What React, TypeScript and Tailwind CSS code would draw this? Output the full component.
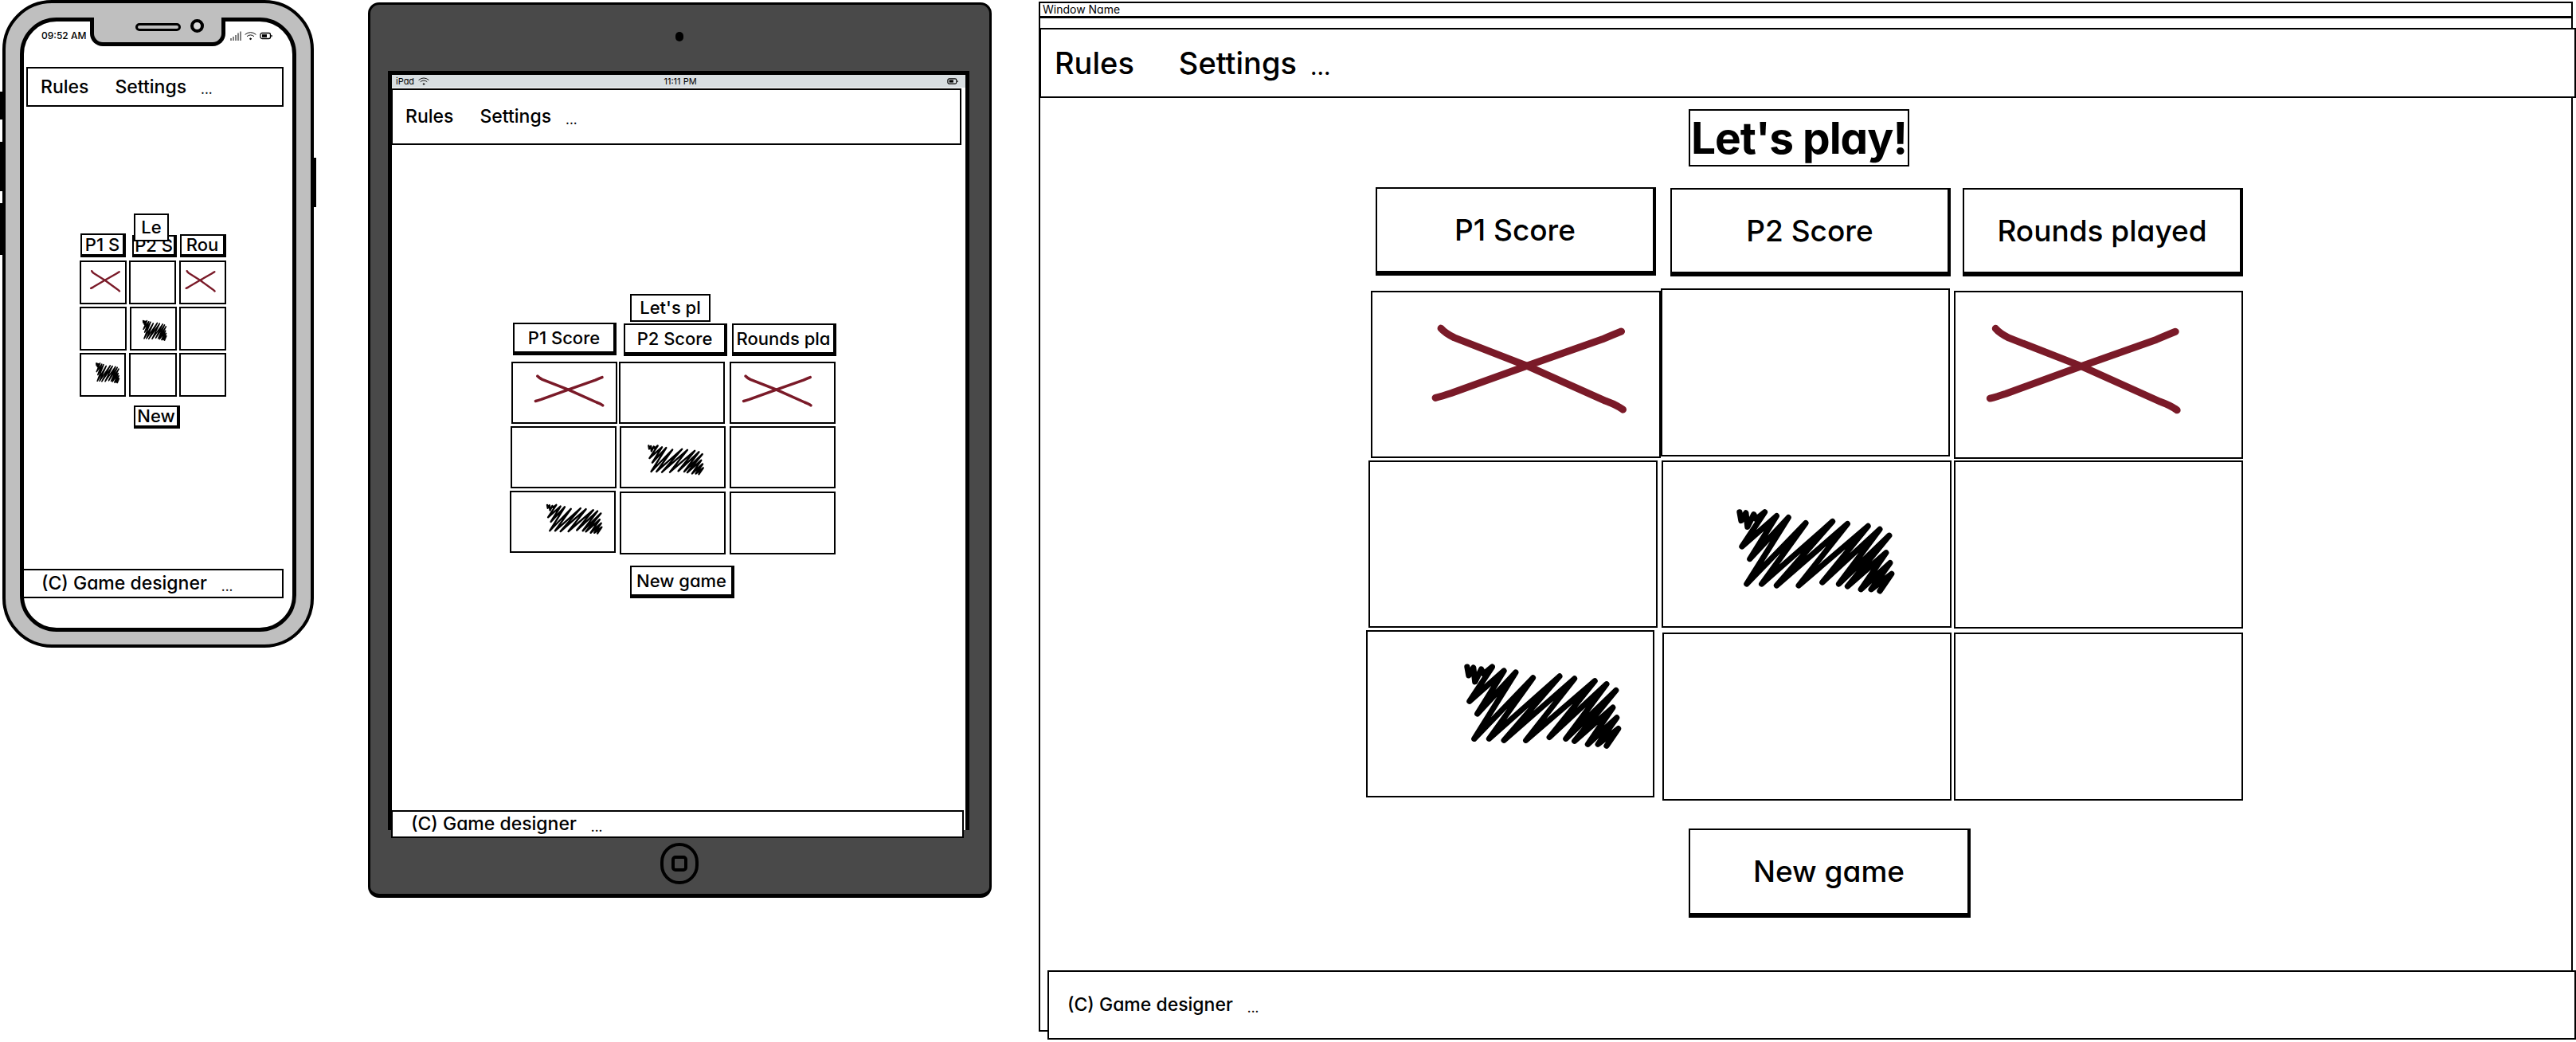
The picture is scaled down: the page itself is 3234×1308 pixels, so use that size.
import React from "react";

type MarkKind = "x" | "x2" | "s" | "s2" | "";

const scribble =
  "M6 3 L8 14 L14 4 L16 22 L24 6 L27 12 L38 3 L9 47 L53 8 L19 63 L68 10 L15 95 L90 17 L34 95 L124 15 L53 97 L143 18 L81 97 L169 21 L111 93 L184 25 L132 95 L196 33 L143 98 L192 55 L160 102 L197 68 L173 102 L199 82 L184 104";

function Mark({ kind, sw }: { kind: MarkKind; sw: number }) {
  if (!kind) return null;
  const isX = kind === "x" || kind === "x2";
  const tx = kind === "x" ? 0 : kind === "x2" ? -36 : kind === "s" ? 91 : 121;
  const ty = kind === "s" ? 61 : kind === "s2" ? 42 : 0;
  return (
    <svg viewBox="0 0 364 210" preserveAspectRatio="none" className="block w-full h-full">
      <g transform={`translate(${tx} ${ty})`} fill="none" strokeLinecap="round" strokeLinejoin="round">
        {isX ? (
          <g stroke="#7a1a28" strokeWidth={sw}>
            <path vectorEffect="non-scaling-stroke" d="M87 46 Q92 52 104 58 L196 94 L296 139 Q310 144 318 150" />
            <path vectorEffect="non-scaling-stroke" d="M316 50 Q306 54 292 60 L196 94 L100 129 Q88 133 80 135" />
          </g>
        ) : (
          <path vectorEffect="non-scaling-stroke" d={scribble} stroke="#000" strokeWidth={sw * 0.8} />
        )}
      </g>
    </svg>
  );
}

function Cell({ className, kind = "", sw }: { className: string; kind?: MarkKind; sw: number }) {
  return (
    <div className={`shrink-0 border-2 border-black bg-white overflow-hidden ${className}`}>
      <Mark kind={kind} sw={sw} />
    </div>
  );
}

function Box({ className, children }: { className: string; children: React.ReactNode }) {
  return (
    <div className={`shrink-0 flex items-center justify-center whitespace-nowrap overflow-hidden bg-white border-black font-medium ${className}`}>
      {children}
    </div>
  );
}

function Bar({ className, items }: { className: string; items: [string, string][] }) {
  return (
    <div className={`shrink-0 flex items-center bg-white border-2 border-black whitespace-nowrap font-medium ${className}`}>
      {items.map(([t, c]) => (
        <span key={t} className={c}>{t}</span>
      ))}
    </div>
  );
}

function Row({ className, children }: { className: string; children: React.ReactNode }) {
  return <div className={`flex items-start ${className}`}>{children}</div>;
}

function Wifi({ className }: { className: string }) {
  return (
    <svg viewBox="0 0 16 12" className={className} fill="none" stroke="#000" strokeWidth="1" strokeLinecap="round">
      <path d="M1 4 Q8 -1.5 15 4" />
      <path d="M3.5 6.5 Q8 3 12.5 6.5" />
      <circle cx="8" cy="10" r="0.9" fill="#000" />
    </svg>
  );
}

function Battery({ className }: { className: string }) {
  return (
    <svg viewBox="0 0 16 10" className={className} fill="none" stroke="#000" strokeWidth="1.3">
      <rect x="1" y="1.5" width="12.5" height="7" rx="2" />
      <rect x="3" y="3.2" width="6" height="3.6" fill="#000" stroke="none" />
      <path d="M15 4v2.2" />
    </svg>
  );
}

function Phone() {
  return (
    <div className="relative shrink-0 ml-[3px] w-[391px] h-[813px] rounded-[62px] border-[4px] border-black bg-[#bfbfbf]">
      <div className="absolute -left-[7px] top-[111px] w-[3px] h-[35px] bg-black" />
      <div className="absolute -left-[7px] top-[174px] w-[3px] h-[62px] bg-black" />
      <div className="absolute -left-[7px] top-[251px] w-[3px] h-[65px] bg-black" />
      <div className="absolute -right-[7px] top-[194px] w-[3px] h-[62px] bg-black" />
      <div className="relative mt-[18px] ml-[18px] w-[347px] h-[771px] rounded-[46px] border-[5px] border-black bg-white">
        <div className="absolute left-[83px] -top-[5px] w-[170px] h-[36px] rounded-b-[16px] border-[5px] border-t-0 border-black bg-[#bfbfbf]" />
        <div className="absolute left-[140px] top-[2px] w-[57px] h-[10px] rounded-full border-[3px] border-black bg-[#bfbfbf]" />
        <div className="absolute left-[209px] top-[-3px] w-[17px] h-[17px] rounded-full border-[4px] border-black bg-[#d9d9d9]" />

        <div className="flex items-center h-[14px] mt-[11px] pl-[22px] pr-[25px]">
          <span className="text-[12px] font-medium leading-none">09:52 AM</span>
          <div className="ml-auto flex items-center gap-[4px]">
            <svg viewBox="0 0 14 12" className="w-[14px] h-[12px]" stroke="#000" strokeWidth="1">
              <path d="M1 12V9M4 12V7M7 12V5M10 12V2.5M13 12V0.5" />
            </svg>
            <Wifi className="w-[15px] h-[12px]" />
            <Battery className="w-[16px] h-[10px]" />
          </div>
        </div>

        <Bar
          className="mt-[32px] ml-[3px] w-[323px] h-[50px] text-[23px]"
          items={[["Rules", "ml-[16px]"], ["Settings", "ml-[33px]"], ["...", "ml-[18px] text-[16px] mt-[6px]"]]}
        />

        <Box className="relative z-10 mt-[134px] ml-[138px] w-[44px] h-[35px] border-2 text-[22px]">Le</Box>
        <Row className="-mt-[10px]">
          <Box className="ml-[71px] w-[57px] h-[30px] border-2 border-r-[4px] border-b-[4px] text-[22px]">P1 S</Box>
          <Box className="ml-[8px] mt-[2px] w-[56px] h-[28px] border-2 border-r-[4px] border-b-[4px] text-[22px]">P2 S</Box>
          <Box className="ml-[4px] mt-[1px] w-[58px] h-[29px] border-2 border-r-[4px] border-b-[4px] text-[22px]">Rou</Box>
        </Row>
        <Row className="mt-[4px]">
          <Cell className="ml-[70px] w-[59px] h-[55px]" kind="x" sw={2.4} />
          <Cell className="ml-[3px] w-[59px] h-[55px]" sw={2.4} />
          <Cell className="ml-[4px] w-[59px] h-[55px]" kind="x2" sw={2.4} />
        </Row>
        <Row className="mt-[3px]">
          <Cell className="ml-[70px] w-[59px] h-[55px]" sw={2.4} />
          <Cell className="ml-[4px] w-[59px] h-[55px]" kind="s" sw={2} />
          <Cell className="ml-[3px] w-[59px] h-[55px]" sw={2.4} />
        </Row>
        <Row className="mt-[3px]">
          <Cell className="ml-[70px] w-[58px] h-[55px]" kind="s2" sw={2} />
          <Cell className="ml-[4px] w-[60px] h-[55px]" sw={2.4} />
          <Cell className="ml-[3px] w-[59px] h-[55px]" sw={2.4} />
        </Row>
        <Box className="mt-[11px] ml-[138px] w-[58px] h-[29px] border-2 border-r-[4px] border-b-[4px] text-[22px]">New</Box>
        <Bar
          className="mt-[176px] -ml-[2px] w-[328px] h-[37px] text-[23px]"
          items={[["(C) Game designer", "ml-[22px]"], ["...", "ml-[18px] text-[16px] mt-[6px]"]]}
        />
      </div>
    </div>
  );
}

function Tablet() {
  return (
    <div className="shrink-0 ml-[68px] mt-[3px] w-[783px] h-[1124px] rounded-[14px] border-[3px] border-b-[5px] border-black bg-[#494949]">
      <div className="ml-[383px] mt-[34px] w-[10px] h-[12px] rounded-full bg-black" />
      <div className="mt-[37px] ml-[22px] w-[730px] h-[953px] border-[5px] border-b-0 border-black bg-white">
        <div className="flex items-center h-[16px] bg-[#d8dee1] px-[5px] relative">
          <span className="text-[11px] leading-none">iPad</span>
          <Wifi className="ml-[5px] w-[14px] h-[12px]" />
          <span className="mx-auto text-[11px] leading-none pr-[20px]">11:11 PM</span>
          <Battery className="w-[14px] h-[10px] mr-[4px]" />
        </div>
        <Bar
          className="mt-[1px] -ml-[1px] w-[716px] h-[71px] text-[23px]"
          items={[["Rules", "ml-[16px]"], ["Settings", "ml-[33px]"], ["...", "ml-[18px] text-[16px] mt-[6px]"]]}
        />
        <Box className="mt-[187px] ml-[299px] w-[101px] h-[35px] border-2 text-[22px]">Let's pl</Box>
        <Row className="mt-[1px]">
          <Box className="ml-[152px] w-[130px] h-[41px] border-2 border-r-[4px] border-b-[5px] text-[22px]">P1 Score</Box>
          <Box className="ml-[9px] mt-[1px] w-[130px] h-[41px] border-2 border-r-[4px] border-b-[5px] text-[22px]">P2 Score</Box>
          <Box className="ml-[6px] mt-[1px] w-[131px] h-[41px] border-2 border-r-[4px] border-b-[5px] text-[22px]">Rounds pla</Box>
        </Row>
        <Row className="mt-[7px]">
          <Cell className="ml-[150px] w-[133px] h-[78px]" kind="x" sw={3.5} />
          <Cell className="ml-[2px] w-[133px] h-[78px]" sw={3.5} />
          <Cell className="ml-[6px] w-[133px] h-[78px]" kind="x2" sw={3.5} />
        </Row>
        <Row className="mt-[3px]">
          <Cell className="ml-[149px] w-[133px] h-[78px]" sw={3} />
          <Cell className="ml-[4px] w-[133px] h-[78px]" kind="s" sw={3} />
          <Cell className="ml-[5px] w-[133px] h-[78px]" sw={3} />
        </Row>
        <Row className="mt-[3px]">
          <Cell className="ml-[148px] w-[133px] h-[78px]" kind="s2" sw={3} />
          <Cell className="ml-[5px] mt-[1px] w-[133px] h-[79px]" sw={3} />
          <Cell className="ml-[5px] mt-[1px] w-[133px] h-[79px]" sw={3} />
        </Row>
        <Box className="mt-[14px] ml-[299px] w-[131px] h-[41px] border-2 border-r-[4px] border-b-[5px] text-[22px]">New game</Box>
        <Bar
          className="mt-[266px] -ml-[1px] w-[719px] h-[35px] text-[23px]"
          items={[["(C) Game designer", "ml-[23px]"], ["...", "ml-[18px] text-[16px] mt-[6px]"]]}
        />
      </div>
      <div className="mt-[16px] ml-[364px] w-[48px] h-[52px] rounded-full border-[4px] border-black flex items-center justify-center">
        <div className="w-[20px] h-[20px] rounded-[5px] border-[4px] border-black" />
      </div>
    </div>
  );
}

function Desktop() {
  const head = "border-2 border-r-[4px] border-b-[6px] text-[37px]";
  return (
    <div className="shrink-0 ml-[59px] mt-[2px] w-[1926px] h-[1293px] border-2 border-black bg-white">
      <div className="flex items-center h-[19px] pl-[3px] border-b-[3px] border-black text-[14px] leading-none">Window Name</div>
      <Bar
        className="mt-[12px] -ml-[1px] w-[1929px] h-[88px] text-[38px]"
        items={[["Rules", "ml-[17px]"], ["Settings", "ml-[56px]"], ["...", "ml-[17px] text-[28px] mt-[10px]"]]}
      />
      <Box className="mt-[14px] ml-[814px] w-[277px] h-[72px] border-2 text-[55px] [font-weight:650] tracking-[-1px]">Let's play!</Box>
      <Row className="mt-[26px]">
        <Box className={`ml-[421px] w-[352px] h-[111px] ${head}`}>P1 Score</Box>
        <Box className={`ml-[18px] mt-[1px] w-[352px] h-[111px] ${head}`}>P2 Score</Box>
        <Box className={`ml-[15px] mt-[1px] w-[352px] h-[111px] ${head}`}>Rounds played</Box>
      </Row>
      <Row className="mt-[15px]">
        <Cell className="ml-[415px] mt-[3px] w-[364px] h-[210px]" kind="x" sw={9} />
        <Cell className="w-[363px] h-[211px]" sw={9} />
        <Cell className="ml-[5px] mt-[3px] w-[363px] h-[211px]" kind="x2" sw={9} />
      </Row>
      <Row className="mt-[2px]">
        <Cell className="ml-[412px] w-[363px] h-[210px]" sw={9} />
        <Cell className="ml-[5px] w-[364px] h-[210px]" kind="s" sw={9} />
        <Cell className="ml-[3px] w-[363px] h-[211px]" sw={9} />
      </Row>
      <Row className="mt-[2px]">
        <Cell className="ml-[409px] w-[362px] h-[210px]" kind="s2" sw={9} />
        <Cell className="ml-[10px] mt-[3px] w-[363px] h-[211px]" sw={9} />
        <Cell className="ml-[3px] mt-[3px] w-[363px] h-[211px]" sw={9} />
      </Row>
      <Box className={`mt-[35px] ml-[814px] w-[354px] h-[112px] ${head}`}>New game</Box>
      <Bar
        className="mt-[66px] ml-[9px] w-[1919px] h-[87px] text-[23px]"
        items={[["(C) Game designer", "ml-[23px]"], ["...", "ml-[18px] text-[16px] mt-[6px]"]]}
      />
    </div>
  );
}

export default function App() {
  return (
    <div className="flex items-start w-[3234px] h-[1308px] overflow-hidden bg-white text-black font-['Inter',sans-serif] [font-feature-settings:'cv11']">
      <Phone />
      <Tablet />
      <Desktop />
    </div>
  );
}
